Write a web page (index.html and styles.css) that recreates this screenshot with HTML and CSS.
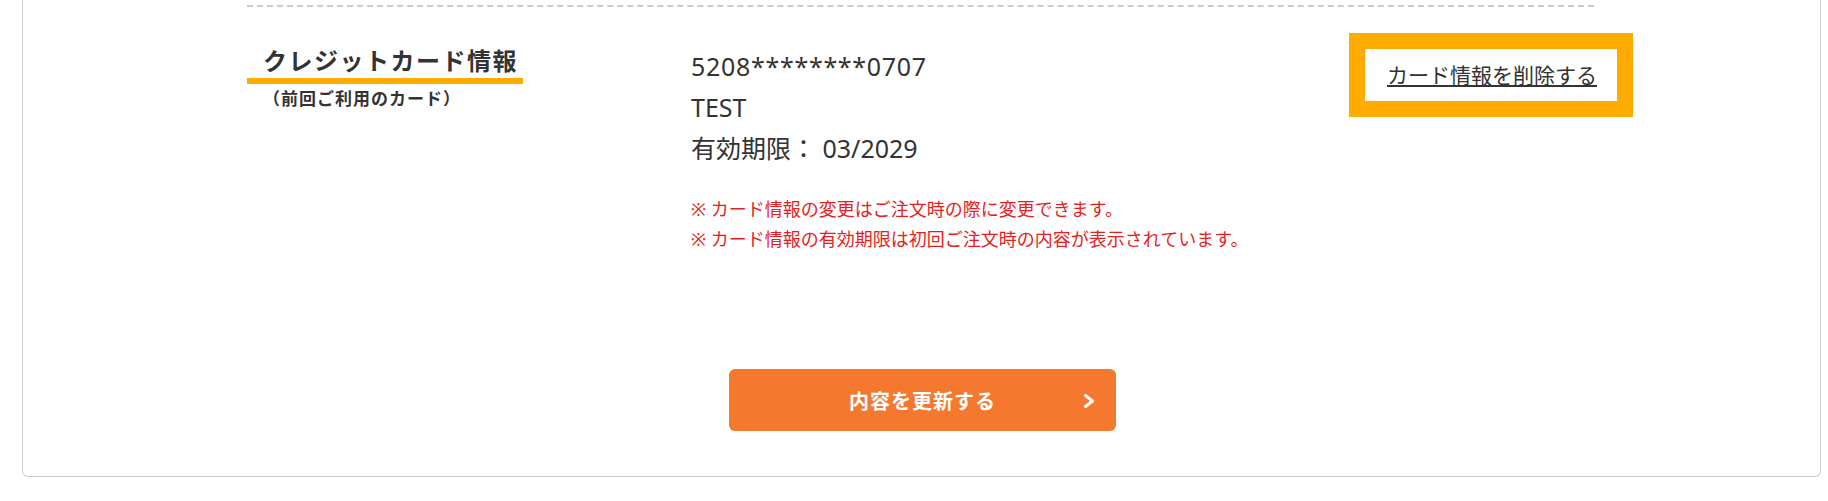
FILE: index.html
```html
<!DOCTYPE html>
<html lang="ja">
  <head>
    <meta charset="UTF-8" />
    <meta name="viewport" content="width=device-width, initial-scale=1.0" />
    <title>クレジットカード情報</title>
    <link rel="stylesheet" href="styles.css">
  </head>
  <body>
    <div class="card">
      <div class="inner">
        <div class="section">
          <div class="row">
            <div class="label">
              <h2 class="label-title">クレジットカード情報</h2>
              <p class="label-sub">（前回ご利用のカード）</p>
            </div>
            <div class="detail">
              <p class="card-number">5208********0707</p>
              <p>TEST</p>
              <p>有効期限： 03/2029</p>
              <ul class="notes">
                <li>※ カード情報の変更はご注文時の際に変更できます。</li>
                <li>※ カード情報の有効期限は初回ご注文時の内容が表示されています。</li>
              </ul>
            </div>
            <a class="delete" href="#">カード情報を削除する</a>
          </div>
        </div>
        <div class="actions">
          <button class="submit" type="button">
            内容を更新する
            <svg class="submit-arrow" width="12" height="14" viewBox="0 0 12 14">
              <polyline points="2.5,1.5 9.5,7 2.5,12.5" fill="none" stroke="#fff" stroke-width="3" stroke-linecap="round" stroke-linejoin="round" />
            </svg>
          </button>
        </div>
      </div>
    </div>
  </body>
</html>
```

FILE: styles.css
```css
* {
  padding: 0;
  margin: 0;
  box-sizing: border-box;
}
body {
  background-color: #fff;
  color: #333;
  font-family: "Noto Sans", "Noto Sans CJK JP", sans-serif;
}
.card {
  margin: 0 7px 23px 22px;
  border: 1px solid #ccc;
  border-top: 0;
  border-radius: 0 0 6px 6px;
  background-color: #fff;
}
.inner {
  padding: 5px 226px 45px 224px;
}
.section {
  border-top: 2px dashed #ccc;
}
.row {
  display: flex;
  align-items: flex-start;
  padding-top: 37px;
}
.label {
  width: 444px;
  flex-shrink: 0;
}
.label-title {
  display: inline-block;
  padding: 0 5px 0 16px;
  font-size: 24px;
  line-height: 34px;
  letter-spacing: 1.5px;
  font-weight: 700;
  border-bottom: 6px solid #ffab00;
}
.label-sub {
  padding: 3px 0 0 16px;
  font-size: 17px;
  line-height: 24px;
  letter-spacing: 1px;
  font-weight: 700;
}
.detail {
  flex: 1;
  padding-top: 2px;
  font-size: 25px;
  line-height: 41px;
}
.card-number {
  letter-spacing: 0.7px;
}
.notes {
  list-style: none;
  margin-top: 25px;
  font-size: 18px;
  line-height: 30px;
  color: #e61e1e;
}
.delete {
  margin: 5px -23px 0 0;
  padding: 10px 20px 10px 22px;
  background-color: #fff;
  outline: 16px solid #ffab00;
  color: #333;
  font-size: 21px;
  line-height: 32px;
  white-space: nowrap;
  text-decoration: underline;
}
.actions {
  display: flex;
  justify-content: center;
  padding: 115px 0 0 4px;
}
.submit {
  position: relative;
  width: 387px;
  height: 62px;
  border: 0;
  border-radius: 6px;
  background-color: #f4792e;
  color: #fff;
  font-family: inherit;
  font-size: 20px;
  font-weight: 700;
  letter-spacing: 1px;
}
.submit-arrow {
  position: absolute;
  top: 25px;
  right: 21px;
}
```
